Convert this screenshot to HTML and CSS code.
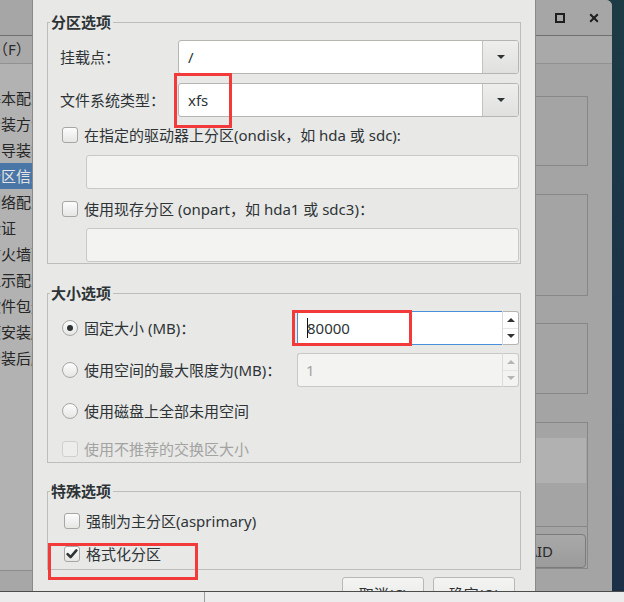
FILE: index.html
```html
<!DOCTYPE html>
<html lang="zh-CN">
<head>
<meta charset="utf-8">
<title>分区选项</title>
<link rel="stylesheet" href="styles.css">
</head>
<body>
<div class="screen">
  <div class="desktop">
    <div class="bgwin">
      <div class="bg-titlebar">
        <svg class="wicon" width="10" height="10" viewBox="0 0 10 10"><rect x="1" y="1" width="8" height="8" fill="none" stroke="#1e1e1e" stroke-width="2"/></svg>
        <svg class="wicon" width="10" height="10" viewBox="0 0 10 10"><path d="M1.2 1.2L8.8 8.8M8.8 1.2L1.2 8.8" stroke="#1e1e1e" stroke-width="2" fill="none"/></svg>
      </div>
      <div class="bg-menubar"><span class="menu">文件（F）</span></div>
      <div class="bg-body">
        <div class="sidebar">
          <ul class="nav">
            <li>基本配置</li>
            <li>安装方法</li>
            <li>引导装载程序选项</li>
            <li class="sel">分区信息</li>
            <li>网络配置</li>
            <li>验证</li>
            <li>防火墙配置</li>
            <li>显示配置</li>
            <li>软件包选择</li>
            <li>预安装脚本</li>
            <li>安装后脚本</li>
          </ul>
        </div>
        <div class="bg-content">
          <div class="bbox box-a"></div>
          <div class="bbox box-b"></div>
          <div class="bbox box-c"></div>
          <div class="bbox box-d">
            <div class="d-head"></div>
            <div class="d-list"></div>
            <div class="d-spacer"></div>
            <div class="d-actions"><span class="bg-btn">RAID</span></div>
          </div>
        </div>
      </div>
    </div>

    <div class="dialog">
      <fieldset class="frame frame-part">
        <legend>分区选项</legend>
        <div class="field-row first">
          <span class="field-label">挂载点：</span>
          <div class="combo"><span class="combo-text">/</span><span class="combo-btn"><i class="arrow-down"></i></span></div>
        </div>
        <div class="field-row second">
          <span class="field-label">文件系统类型：</span>
          <div class="combo"><span class="combo-text">xfs</span><span class="combo-btn"><i class="arrow-down"></i></span></div>
        </div>
        <div class="check-row ondisk">
          <span class="check"></span>
          <span>在指定的驱动器上分区(ondisk，如 hda 或 sdc):</span>
        </div>
        <div class="entry disabled e1"></div>
        <div class="check-row onpart">
          <span class="check"></span>
          <span>使用现存分区 (onpart，如 hda1 或 sdc3)：</span>
        </div>
        <div class="entry disabled e2"></div>
      </fieldset>

      <fieldset class="frame frame-size">
        <legend>大小选项</legend>
        <div class="opt-row fixed">
          <span class="radio on"></span>
          <span>固定大小 (MB)：</span>
          <div class="spin focus">
            <span class="spin-field"><span class="caret"></span>80000</span>
            <span class="spin-btns"><span class="sb"><i class="arrow-up"></i></span><span class="sb"><i class="arrow-down"></i></span></span>
          </div>
        </div>
        <div class="opt-row maxsize">
          <span class="radio"></span>
          <span>使用空间的最大限度为(MB)：</span>
          <div class="spin disabled">
            <span class="spin-field">1</span>
            <span class="spin-btns"><span class="sb"><i class="arrow-up"></i></span><span class="sb"><i class="arrow-down"></i></span></span>
          </div>
        </div>
        <div class="check-row grow">
          <span class="radio"></span>
          <span>使用磁盘上全部未用空间</span>
        </div>
        <div class="check-row swap muted">
          <span class="check off"></span>
          <span>使用不推荐的交换区大小</span>
        </div>
      </fieldset>

      <fieldset class="frame frame-special">
        <legend>特殊选项</legend>
        <div class="check-row primary">
          <span class="check"></span>
          <span>强制为主分区(asprimary)</span>
        </div>
        <div class="check-row format">
          <span class="check checked"><svg width="14" height="14" viewBox="0 0 14 14"><path d="M2.6 7.2L5.6 10.2L11.4 3.4" fill="none" stroke="#2e3436" stroke-width="2.6" stroke-linecap="round" stroke-linejoin="round"/></svg></span>
          <span>格式化分区</span>
        </div>
      </fieldset>

      <div class="dlg-buttons">
        <span class="btn">取消(C)</span>
        <span class="btn">确定(O)</span>
      </div>

      <span class="mark mark-fs"></span>
      <span class="mark mark-size"></span>
      <span class="mark mark-format"></span>
    </div>
  </div>
  <div class="taskbar"><span class="tb-sep"></span></div>
</div>
</body>
</html>
```

FILE: styles.css
```css
* { box-sizing: border-box; }
html, body { margin: 0; padding: 0; }
body {
  width: 624px;
  height: 602px;
  overflow: hidden;
  font-family: "Noto Sans", "Noto Sans CJK SC", sans-serif;
  font-size: 15px;
  color: #2e3436;
  background: #1c3446;
}
.screen { display: flex; flex-direction: column; width: 624px; height: 602px; }
.desktop {
  position: relative;
  height: 591px;
  flex: 0 0 591px;
  overflow: hidden;
  display: flex;
  background: linear-gradient(180deg, #1d3b45 0%, #1b3349 55%, #1b2f46 100%);
}

/* background (parent) window, dimmed */
.bgwin {
  width: 612px;
  height: 591px;
  display: flex;
  flex-direction: column;
  background: #a5a5a5;
  border-top-right-radius: 6px;
  overflow: hidden;
}
.bg-titlebar {
  height: 36px;
  border-bottom: 1px solid #6e6e6e;
  background: #a6a6a6;
  display: flex;
  justify-content: flex-end;
  align-items: center;
  gap: 24px;
  padding-right: 13px;
}
.wicon { display: block; }
.bg-menubar {
  height: 28px;
  border-bottom: 1px solid #929292;
  background: #a9a9a9;
  line-height: 27px;
  color: #2a2a2a;
}
.menu { display: inline-block; margin-left: -37px; }
.bg-body { flex: 1; display: flex; }
.sidebar { width: 200px; display: flex; flex-direction: column; background: #a7a7a7; }
.nav {
  list-style: none;
  margin: 0;
  padding: 21px 0 0 0;
  height: 507px;
  background: #b2b2b2;
  border-bottom: 1px solid #8c8c8c;
  color: #262626;
}
.nav li { height: 26px; line-height: 26px; text-indent: -14px; white-space: nowrap; }
.nav li.sel { background: #4a76a7; color: #e4e4e4; }
.bg-content {
  flex: 1;
  display: flex;
  flex-direction: column;
  padding-right: 24px;
  background: #a4a4a4;
}
.bbox { border: 1px solid #878787; }
.box-a { margin-top: 32px; height: 70px; }
.box-b { margin-top: 28px; height: 102px; }
.box-c { margin-top: 27px; height: 71px; }
.box-d { margin-top: 28px; height: 147px; display: flex; flex-direction: column; }
.d-head { height: 15px; }
.d-list { height: 45px; background: #b1b1b1; margin-right: 1px; }
.d-spacer { height: 43px; }
.d-actions {
  flex: 1;
  border-top: 1px solid #878787;
  display: flex;
  justify-content: flex-end;
  align-items: flex-end;
  padding: 0 1px 0 0;
}
.bg-btn {
  width: 120px;
  height: 34px;
  border: 1px solid #7b7b7b;
  border-radius: 4px;
  background: linear-gradient(180deg, #a9a9a9, #9b9b9b);
  display: flex;
  align-items: center;
  justify-content: flex-end;
  padding-right: 32px;
  color: #2b2b2b;
  margin-bottom: 0;
}

/* dialog */
.dialog {
  position: absolute;
  left: 32px;
  top: 0;
  width: 504px;
  height: 600px;
  background: #e8e8e7;
  border-left: 1px solid #8a8a8a;
  border-right: 1px solid #8a8a8a;
  padding: 12px 14px 0 14px;
}
.frame {
  margin: 0;
  padding: 0;
  min-width: 0;
  border: 1px solid #bdbdbb;
}
.frame legend {
  margin-left: 2px;
  padding: 0 2px 0 1px;
  font-weight: bold;
  line-height: 20px;
  height: 20px;
}
.frame-part { padding-bottom: 1px; }
.frame-size { margin-top: 19px; padding-bottom: 1px; }
.frame-special { margin-top: 18px; padding-bottom: 3px; }

.field-row { display: flex; align-items: center; height: 34px; }
.field-row.first { margin-top: 8px; }
.field-row.second { margin-top: 9px; }
.field-label { flex: 0 0 130px; padding-left: 12px; line-height: 20px; }

.combo {
  width: 341px;
  height: 34px;
  display: flex;
  border: 1px solid #b5b5b2;
  border-radius: 3px;
  background: #fff;
  overflow: hidden;
}
.combo-text { flex: 1; padding-left: 9px; line-height: 32px; color: #2e3436; }
.combo-btn {
  width: 36px;
  border-left: 1px solid #c2c2bf;
  background: linear-gradient(180deg, #eeeeed, #e0e0de);
  display: flex;
  align-items: center;
  justify-content: center;
}
.arrow-down, .arrow-up { display: block; width: 0; height: 0; border-left: 4.5px solid transparent; border-right: 4.5px solid transparent; }
.arrow-down { border-top: 4px solid #2e3436; }
.arrow-up { border-bottom: 4px solid #2e3436; }

.check-row { display: flex; align-items: center; height: 24px; padding-left: 14px; gap: 6px; line-height: 20px; white-space: nowrap; }
.check-row.ondisk { margin-top: 6px; }
.check-row.onpart { margin-top: 8px; }
.check-row.grow { margin-top: 12px; }
.check-row.swap { margin-top: 14px; }
.check-row.primary { margin-top: 8px; padding-left: 16px; }
.check-row.format { margin-top: 9px; padding-left: 16px; }
.muted { color: #a3a3a1; }

.check {
  flex: 0 0 16px;
  width: 16px;
  height: 16px;
  border: 1px solid #a6a6a4;
  border-radius: 3px;
  background: linear-gradient(180deg, #fcfcfc, #e6e6e5);
  display: flex;
  align-items: center;
  justify-content: center;
}
.check.off { border-color: #cfcfcd; background: #ededec; }
.radio {
  flex: 0 0 16px;
  width: 16px;
  height: 16px;
  border: 1px solid #a6a6a4;
  border-radius: 50%;
  background: linear-gradient(180deg, #fcfcfc, #e6e6e5);
  display: flex;
  align-items: center;
  justify-content: center;
}
.radio.on::after { content: ""; width: 6px; height: 6px; border-radius: 50%; background: #2e3436; }

.entry {
  height: 34px;
  margin-left: 38px;
  margin-right: 1px;
  border: 1px solid #c8c8c5;
  border-radius: 3px;
  background: #f3f3f2;
}
.entry.e1 { margin-top: 8px; }
.entry.e2 { margin-top: 7px; }

.opt-row { display: flex; align-items: center; height: 34px; padding-left: 14px; gap: 6px; line-height: 20px; white-space: nowrap; }
.opt-row.fixed { margin-top: 8px; }
.opt-row.maxsize { margin-top: 8px; }
.spin { margin-left: auto; margin-right: 1px; width: 222px; height: 34px; display: flex; }
.spin-field {
  flex: 1;
  border: 1px solid #c8c8c5;
  border-right: none;
  border-radius: 3px 0 0 3px;
  padding-left: 8px;
  line-height: 32px;
  background: #f3f3f2;
  color: #a3a3a1;
}
.spin.focus .spin-field { background: #fff; border-color: #4a90d9; color: #2e3436; padding-left: 9px; }
.caret { display: inline-block; width: 1px; height: 20px; background: #111; vertical-align: -4px; margin-right: -1px; }
.spin-btns {
  width: 17px;
  display: flex;
  flex-direction: column;
  border: 1px solid #b5b5b2;
  border-left: 1px solid #dadad8;
  border-radius: 0 3px 3px 0;
  background: #fff;
}
.sb { flex: 1; display: flex; align-items: center; justify-content: center; }
.sb + .sb { border-top: 1px solid #e4e4e2; }
.spin.disabled .spin-btns { background: #f3f3f2; border-color: #c8c8c5; border-left-color: #dcdcda; }
.spin.disabled .arrow-up { border-bottom-color: #b5b5b3; }
.spin.disabled .arrow-down { border-top-color: #b5b5b3; }

.dlg-buttons { display: flex; justify-content: flex-end; gap: 9px; margin-top: 7px; padding-right: 6px; }
.btn {
  width: 82px;
  height: 34px;
  border: 1px solid #b8b8b6;
  border-radius: 3px;
  background: linear-gradient(180deg, #f4f4f3, #e6e6e5);
  display: flex;
  align-items: center;
  justify-content: center;
  line-height: 20px;
}

/* red annotation marks */
.mark { position: absolute; border: 3px solid #f23a3a; }
.mark-fs { left: 141px; top: 73px; width: 58px; height: 55px; }
.mark-size { left: 259px; top: 310px; width: 120px; height: 36px; }
.mark-format { left: 15px; top: 543px; width: 150px; height: 37px; }

.taskbar {
  height: 11px;
  flex: 0 0 11px;
  border-top: 1px solid #4c4c4c;
  background: #ececec;
  display: flex;
  padding-left: 204px;
}
.tb-sep { width: 1px; height: 10px; background: #9c9c9c; }
```
